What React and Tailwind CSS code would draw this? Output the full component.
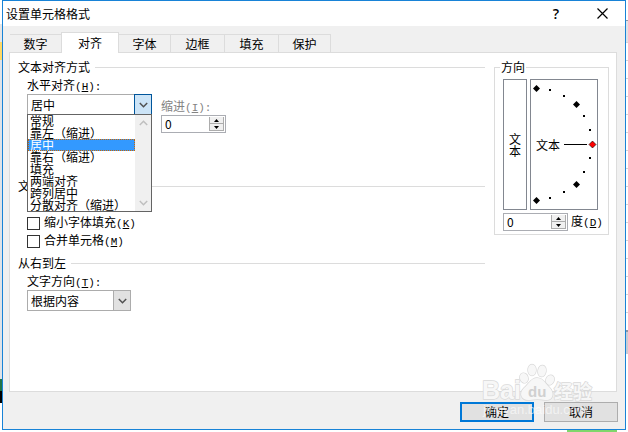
import React from "react";

const tabs = [
  { label: "数字", width: "w-[51px]" },
  { label: "对齐", width: "w-[58px]" },
  { label: "字体", width: "w-[52px]" },
  { label: "边框", width: "w-[54px]" },
  { label: "填充", width: "w-[54px]" },
  { label: "保护", width: "w-[52px]" },
];

const alignments = ["常规", "靠左（缩进）", "居中", "靠右（缩进）", "填充", "两端对齐", "跨列居中", "分散对齐（缩进）"];

const bigMarks = [[5, 8], [45, 24], [45, 104], [5, 120]];
const smallMarks = [[18, 9], [32, 15], [52, 35], [58, 49], [58, 77], [52, 91], [32, 111], [18, 117]];

function Key({ children, colon }) {
  return (
    <span className="font-['Liberation_Mono',monospace] text-[11px]">
      (<u>{children}</u>){colon ? ":" : ""}
    </span>
  );
}

function Chevron({ up, className }) {
  return (
    <svg width="9" height="6" viewBox="0 0 9 6" className={className} fill="none" stroke="currentColor">
      <path d={up ? "M0.8 5 4.5 1.3 8.2 5" : "M0.8 1 4.5 4.7 8.2 1"} strokeWidth="1.5" />
    </svg>
  );
}

function Section({ title, className = "" }) {
  return (
    <div className={`flex h-[18px] items-center gap-[5px] ${className}`}>
      <h2>{title}</h2>
      <div className="h-px flex-1 bg-[#dcdcdc]" />
    </div>
  );
}

function Combo({ id, value, active, className }) {
  return (
    <div className={`grid h-[21px] ${className}`}>
      <select
        id={id}
        defaultValue={value}
        className="col-start-1 row-start-1 w-full appearance-none border border-[#acacac] bg-white pl-[3px] leading-[18px] outline-none"
      >
        <option>{value}</option>
      </select>
      <span
        className={`pointer-events-none col-start-1 row-start-1 flex w-[18px] items-center justify-center justify-self-end border ${
          active ? "border-[#00559b] bg-[#cce4f7]" : "border-[#acacac] bg-[#e1e1e1]"
        }`}
      >
        <Chevron className="text-[#505050]" />
      </span>
    </div>
  );
}

function Spinner({ id }) {
  return (
    <div className="flex h-[18px] w-[65px] border border-[#abadb3] bg-white p-px">
      <input id={id} type="text" defaultValue="0" className="w-0 min-w-0 flex-1 pl-[2px] outline-none" />
      <div className="flex w-[15px] flex-col">
        <button type="button" aria-label="增加" className="flex flex-1 items-center justify-center border border-t-0 border-[#acacac] bg-[#f0f0f0]">
          <svg width="5" height="3" viewBox="0 0 5 3"><path d="M2.5 0 5 3H0z" /></svg>
        </button>
        <button type="button" aria-label="减少" className="flex flex-1 items-center justify-center border border-t-0 border-[#acacac] bg-[#f0f0f0]">
          <svg width="5" height="3" viewBox="0 0 5 3"><path d="M0 0h5L2.5 3z" /></svg>
        </button>
      </div>
    </div>
  );
}

function Check({ id, label, hotkey }) {
  return (
    <div className="flex h-[18px] items-center gap-1 pl-[9px]">
      <input id={id} type="checkbox" className="size-[13px] appearance-none border border-[#333] bg-white checked:bg-[#0078d7]" />
      <label htmlFor={id}>
        {label}
        <Key>{hotkey}</Key>
      </label>
    </div>
  );
}

function AlignmentList() {
  return (
    <div className="absolute top-full left-0 z-10 -mt-px flex w-full border border-[#646464] bg-white">
      <ul role="listbox" aria-label="水平对齐" className="flex-1">
        {alignments.map((name) => (
          <li
            key={name}
            role="option"
            aria-selected={name === "居中"}
            className="h-3 pl-[2px] leading-3 whitespace-nowrap aria-selected:bg-[#3399ff] aria-selected:text-white aria-selected:outline aria-selected:-outline-offset-1 aria-selected:outline-dotted aria-selected:outline-[#cc6600]"
          >
            {name}
          </li>
        ))}
      </ul>
      <div className="flex w-4 flex-col items-center justify-between bg-[#f0f0f0] py-[5px] text-[#bfbfbf]">
        <Chevron up />
        <Chevron />
      </div>
    </div>
  );
}

function Orientation() {
  return (
    <fieldset className="w-[115px] self-start border border-[#dcdcdc] pt-[3px] pr-[5px] pb-[2px] pl-2">
      <legend className="-ml-[3px] h-[18px] px-px leading-[18px]">方向</legend>
      <div className="flex gap-[3px]">
        <button type="button" className="flex h-[131px] w-6 flex-col items-center justify-center border border-[#828790] leading-3">
          <span>文</span>
          <span>本</span>
        </button>
        <div className="grid h-[131px] w-[68px] border border-[#828790]">
          <span className="col-start-1 row-start-1 self-center pl-[5px]">文本</span>
          <svg width="66" height="129" viewBox="0 0 66 129" className="col-start-1 row-start-1">
            <path d="M33 64.5h23" stroke="#000" />
            {bigMarks.map(([x, y]) => (
              <path key={`${x}-${y}`} d={`M${x + 0.5} ${y - 3}l3.5 3.5-3.5 3.5-3.5-3.5z`} />
            ))}
            {smallMarks.map(([x, y]) => (
              <rect key={`${x}-${y}`} x={x} y={y} width="2" height="2" />
            ))}
            <path d="M61.5 61l3.5 3.5-3.5 3.5-3.5-3.5z" fill="#f00" stroke="#000" strokeWidth="0.6" />
          </svg>
        </div>
      </div>
      <div className="mt-[2px] flex items-center gap-[3px]">
        <Spinner id="degrees" />
        <label htmlFor="degrees" className="whitespace-nowrap">
          度<Key>D</Key>
        </label>
      </div>
    </fieldset>
  );
}

function Watermark() {
  return (
    <svg width="116" height="56" viewBox="0 0 116 56" className="pointer-events-none absolute right-[30px] bottom-[10px]">
      <g fill="#f7f7f7" stroke="#d9d9d9" strokeWidth="1.4" paintOrder="stroke" fontWeight="700">
        <text x="3" y="36" fontSize="25" fontFamily="Liberation Sans, sans-serif">Bai</text>
        <ellipse cx="45" cy="15" rx="4" ry="5" transform="rotate(-20 45 15)" />
        <ellipse cx="53" cy="7" rx="4" ry="5.6" />
        <ellipse cx="63" cy="8" rx="4" ry="5.6" transform="rotate(10 63 8)" />
        <ellipse cx="71" cy="17" rx="4" ry="5" transform="rotate(25 71 17)" />
        <path d="M58 15c6 0 8 5 12 9 7 7 3 14-4 13-5-1-10-1-15 0-8 1-12-6-6-12 5-4 7-10 13-10z" />
        <text x="75" y="36" fontSize="19" fontFamily="Noto Sans CJK SC, sans-serif">经验</text>
      </g>
      <text x="49" y="34" fontSize="15" fontWeight="700" fill="#d0d0d0" fontFamily="Liberation Sans, sans-serif">du</text>
      <text x="4" y="51" fontSize="13" fill="#fff" fillOpacity="0.6" fontFamily="Liberation Sans, sans-serif">jingyan.baidu.com</text>
    </svg>
  );
}

export default function App() {
  return (
    <div className="min-h-screen bg-white font-['Noto_Sans_CJK_SC',sans-serif] text-xs leading-[18px] text-black">
      <div className="flex">
        {/* slivers of the worksheet on both sides of the dialog */}
        <div className="flex w-[2px] flex-col bg-[#dfe3e8]">
          <div className="h-6 bg-white" />
          <div className="h-[18px] bg-[#e6e6e6]" />
          <div className="h-[18px] bg-[#ffd966]" />
          <div className="flex-1" />
          <div className="h-3 bg-[#217346]" />
          <div className="h-3 bg-black" />
          <div className="h-[27px] bg-white" />
        </div>
        <div role="dialog" aria-labelledby="title" className="relative min-w-0 flex-1 border border-[#1883d7] bg-[#f0f0f0]">
          <header className="flex h-[25px] items-center bg-white pl-[3px]">
            <h1 id="title" className="flex-1">设置单元格格式</h1>
            <button type="button" aria-label="帮助" className="w-[46px] font-['Open_Sans',sans-serif] text-sm font-semibold">?</button>
            <button type="button" aria-label="关闭" className="flex w-[46px] justify-center">
              <svg width="11" height="11" viewBox="0 0 11 11" stroke="#000" strokeWidth="1.2">
                <path d="M0.5 0.5l10 10M10.5 0.5l-10 10" />
              </svg>
            </button>
          </header>

          <div role="tablist" className="mt-[6px] ml-[7px] flex h-5 items-end">
            {tabs.map(({ label, width }, i) => (
              <button
                key={label}
                type="button"
                role="tab"
                aria-selected={i === 1}
                className={`${width} border-[#dcdcdc] ${
                  i === 1 ? "z-1 -mb-px h-[21px] border-x border-t bg-white" : `h-[18px] border-t leading-[18px] ${i > 1 ? "border-r" : ""}`
                }`}
              >
                {label}
              </button>
            ))}
          </div>

          <main className="mr-2 ml-[6px] flex gap-[9px] border border-[#dcdcdc] bg-white pt-[5px] pr-[7px] pb-[80px] pl-2">
            <div className="min-w-0 flex-1">
              <Section title="文本对齐方式" />
              <div className="flex gap-[9px] pl-[9px]">
                <div className="relative w-[125px] self-start">
                  <label htmlFor="horizontal" className="block h-[18px]">
                    水平对齐<Key colon>H</Key>
                  </label>
                  <Combo id="horizontal" value="居中" active className="w-full" />
                  <AlignmentList />
                </div>
                <div className="pt-[21px]">
                  <label htmlFor="indent" className="block h-[18px] text-[#838383]">
                    缩进<Key colon>I</Key>
                  </label>
                  <Spinner id="indent" />
                </div>
              </div>

              <Section title="文本控制" className="mt-11" />
              <div className="mt-[19px]">
                <Check id="shrink" label="缩小字体填充" hotkey="K" />
                <Check id="merge" label="合并单元格" hotkey="M" />
              </div>

              <Section title="从右到左" className="mt-1" />
              <div className="pl-[9px]">
                <label htmlFor="direction" className="block h-[18px]">
                  文字方向<Key colon>T</Key>
                </label>
                <Combo id="direction" value="根据内容" className="w-[104px]" />
              </div>
            </div>
            <Orientation />
          </main>

          <footer className="flex justify-end gap-[10px] pt-[10px] pr-[7px] pb-[7px]">
            <button type="button" className="h-5 w-[74px] border-2 border-[#0078d7] bg-[#e1e1e1] leading-4">确定</button>
            <button type="button" className="h-5 w-[74px] border border-[#adadad] bg-[#e1e1e1] leading-[18px]">取消</button>
          </footer>
          <Watermark />
        </div>
        <div className="flex w-[2px] flex-col bg-white">
          <div className="h-5" />
          <div className="h-[22px] border-t border-[#8c96a5] bg-[#dfe3e8]" />
          {Array.from({ length: 16 }, (_, i) => (
            <div key={i} className="h-[18px] border-t border-[#d4d4d4]" />
          ))}
          <div className="h-6 border-t-2 border-[#8c96a5] bg-[#c8ccd4]" />
        </div>
      </div>
      <div className="mr-[11px] ml-auto h-[2px] w-[50px] bg-[#7fd66b]" />
    </div>
  );
}
